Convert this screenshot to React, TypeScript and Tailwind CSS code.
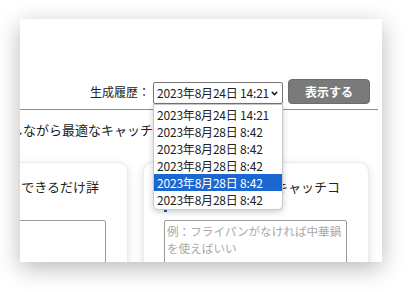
import React from 'react'
import { ChevronDown } from 'lucide-react'

const history = [
  '2023年8月24日 14:21',
  '2023年8月28日 8:42',
  '2023年8月28日 8:42',
  '2023年8月28日 8:42',
  '2023年8月28日 8:42',
  '2023年8月28日 8:42',
]

export default function App() {
  return (
    <div className="w-[411px] h-[292px] bg-white pl-[20px] pt-[19px] font-['Noto_Sans_CJK_JP','Noto_Sans',sans-serif] text-[#222]">
      <div className="w-[362px] h-[243px] bg-white overflow-hidden shadow-[0_6px_22px_rgba(0,0,0,0.28)]">
        <div className="flex items-center justify-end pt-[60px] pr-[12px] gap-[5px]">
          <span className="text-[12px] leading-[20px] mr-[-2px] whitespace-nowrap">生成履歴：</span>
          <div className="relative mt-[3px]">
            <div className="w-[130px] h-[22px] border border-[#767676] rounded-[2px] bg-white flex items-center justify-between pl-[3px] pr-[3px] overflow-hidden">
              <span className="text-[12px] leading-none tracking-[-0.2px] whitespace-nowrap">2023年8月24日 14:21</span>
              <ChevronDown className="w-[9px] h-[9px] shrink-0" strokeWidth={4} />
            </div>
            <DropdownList />
          </div>
          <button className="w-[82px] h-[25px] rounded-[4px] bg-[#7a7a7a] border border-[#6c6c6c] text-white text-[12px] font-bold">
            表示する
          </button>
        </div>

        <div className="mt-[5px] mr-[4px] border-b border-[#8f8f8f]" />

        <p className="mt-[10px] ml-[-10px] text-[13px] leading-[20px] whitespace-nowrap">
          しながら最適なキャッチコピーを提案します
        </p>

        <div className="flex gap-[15px] ml-[-118px] mt-[22px]">
          <Card title="目的やターゲットをできるだけ詳" placeholder="料理動画を見て訪" />
          <Card title="参考にしたい例やキャッチコ" placeholder="例：フライパンがなければ中華鍋を使えばいい" mark />
        </div>
      </div>
    </div>
  )
}

function DropdownList() {
  return (
    <div className="absolute left-0 top-full w-[130px] bg-white border border-[#c8c8c8] rounded-b-[5px] shadow-[0_2px_6px_rgba(0,0,0,0.2)] py-[1px] z-10">
      {history.map((h, i) => (
        <div
          key={i}
          className={`h-[17px] px-[3px] flex items-center text-[12px] tracking-[-0.2px] whitespace-nowrap ${i === 4 ? 'bg-[#1a67d2] text-white' : 'text-[#222]'}`}
        >
          {h}
        </div>
      ))}
    </div>
  )
}

const Card: React.FC<{ title: string; placeholder: string; mark?: boolean }> = ({ title, placeholder, mark }) => {
  return (
    <div className="w-[226px] h-[140px] shrink-0 bg-white rounded-[10px] border border-[#ececec] shadow-[0_2px_8px_rgba(0,0,0,0.12)] pt-[15px] pl-[20px] pr-[21px]">
      <div className="mr-[7px] text-[13px] leading-[18px] whitespace-nowrap overflow-hidden flex justify-end">
        <span className="shrink-0">{title}</span>
      </div>
      <div className="h-[24px] pt-[10px]">
        {mark && <div className="w-[3px] h-[6px] bg-[#1a5bb8]" />}
      </div>
      <div className="h-[80px] border border-[#9a9a9a] rounded-[2px] px-[2px] pt-[2px] text-[11.6px] leading-[17px] text-[#a8a8a8] overflow-hidden">
        {placeholder}
      </div>
    </div>
  )
}
